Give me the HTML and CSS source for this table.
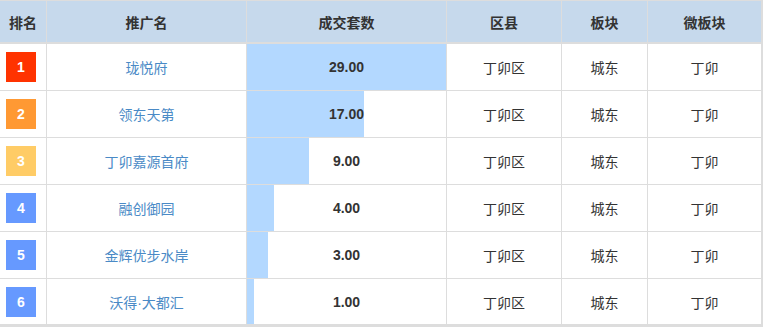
FILE: index.html
```html
<!DOCTYPE html>
<html lang="zh">
<head>
<meta charset="utf-8">
<title>排名</title>
<link rel="stylesheet" href="styles.css">
</head>
<body>
<table class="rank-table">
  <colgroup>
    <col class="c-rank"><col class="c-name"><col class="c-count"><col class="c-dist"><col class="c-block"><col class="c-micro">
  </colgroup>
  <thead>
    <tr><th>排名</th><th>推广名</th><th>成交套数</th><th>区县</th><th>板块</th><th>微板块</th></tr>
  </thead>
  <tbody>
    <tr>
      <td><span class="badge b1">1</span></td>
      <td class="name">珑悦府</td>
      <td class="count"><div class="cell-inner"><span class="bar" style="width:100%"></span><span class="num">29.00</span></div></td>
      <td>丁卯区</td><td>城东</td><td>丁卯</td>
    </tr>
    <tr>
      <td><span class="badge b2">2</span></td>
      <td class="name">领东天第</td>
      <td class="count"><div class="cell-inner"><span class="bar" style="width:58.62%"></span><span class="num">17.00</span></div></td>
      <td>丁卯区</td><td>城东</td><td>丁卯</td>
    </tr>
    <tr>
      <td><span class="badge b3">3</span></td>
      <td class="name">丁卯嘉源首府</td>
      <td class="count"><div class="cell-inner"><span class="bar" style="width:31.03%"></span><span class="num">9.00</span></div></td>
      <td>丁卯区</td><td>城东</td><td>丁卯</td>
    </tr>
    <tr>
      <td><span class="badge b4">4</span></td>
      <td class="name">融创御园</td>
      <td class="count"><div class="cell-inner"><span class="bar" style="width:13.79%"></span><span class="num">4.00</span></div></td>
      <td>丁卯区</td><td>城东</td><td>丁卯</td>
    </tr>
    <tr>
      <td><span class="badge b4">5</span></td>
      <td class="name">金辉优步水岸</td>
      <td class="count"><div class="cell-inner"><span class="bar" style="width:10.34%"></span><span class="num">3.00</span></div></td>
      <td>丁卯区</td><td>城东</td><td>丁卯</td>
    </tr>
    <tr class="last">
      <td><span class="badge b4">6</span></td>
      <td class="name">沃得<span class="dot">·</span>大都汇</td>
      <td class="count"><div class="cell-inner"><span class="bar" style="width:3.45%"></span><span class="num">1.00</span></div></td>
      <td>丁卯区</td><td>城东</td><td>丁卯</td>
    </tr>
  </tbody>
</table>
</body>
</html>
```
FILE: styles.css
```css
html, body {
  margin: 0;
  padding: 0;
  background: #ffffff;
}
body {
  font-family: "Liberation Sans", "Noto Sans CJK SC", Arial, sans-serif;
  font-size: 14px;
  color: #333333;
}
.rank-table {
  width: 763px;
  table-layout: fixed;
  border-collapse: separate;
  border-spacing: 0;
  border-top: 1px solid #dddddd;
  border-bottom: 3px solid #dddddd;
}
.c-rank { width: 47px; }
.c-name { width: 200px; }
.c-count { width: 200px; }
.c-dist { width: 115px; }
.c-block { width: 86px; }
.c-micro { width: 115px; }

.rank-table th {
  height: 41px;
  padding: 0;
  background: #c6d9ec;
  font-weight: bold;
  color: #333333;
  text-align: center;
  vertical-align: middle;
  border-right: 1px solid #dddddd;
  border-bottom: 2px solid #dddddd;
  font-family: "Noto Sans CJK SC", sans-serif;
}
.rank-table td {
  height: 46px;
  padding: 0;
  text-align: center;
  vertical-align: middle;
  border-right: 1px solid #dddddd;
  border-bottom: 1px solid #dddddd;
  font-family: "Noto Sans CJK SC", sans-serif;
}
.rank-table th:last-child,
.rank-table td:last-child {
  border-right-width: 2px;
}
.rank-table tbody tr.last td {
  border-bottom: 0;
  height: 45px;
}
.rank-table tbody tr.last .cell-inner {
  height: 45px;
}
.rank-table td.name {
  color: #4a8ac6;
}
.dot {
  font-family: "Liberation Sans", Arial, sans-serif;
}
.badge {
  display: inline-flex;
  align-items: center;
  justify-content: center;
  width: 30px;
  height: 30px;
  margin-left: -4px;
  color: #ffffff;
  font-family: "Liberation Sans", Arial, sans-serif;
  font-weight: bold;
  font-size: 14px;
}
.b1 { background: #ff3300; }
.b2 { background: #ff9933; }
.b3 { background: #ffcc66; }
.b4 { background: #6699ff; }

.rank-table td.count {
  padding: 0;
}
.cell-inner {
  position: relative;
  height: 46px;
  display: flex;
  align-items: center;
  justify-content: center;
}
.bar {
  position: absolute;
  left: 0;
  top: 0;
  bottom: 0;
  background: #b3d8ff;
}
.num {
  position: relative;
  font-family: "Liberation Sans", Arial, sans-serif;
  font-weight: bold;
  color: #333333;
}
```
